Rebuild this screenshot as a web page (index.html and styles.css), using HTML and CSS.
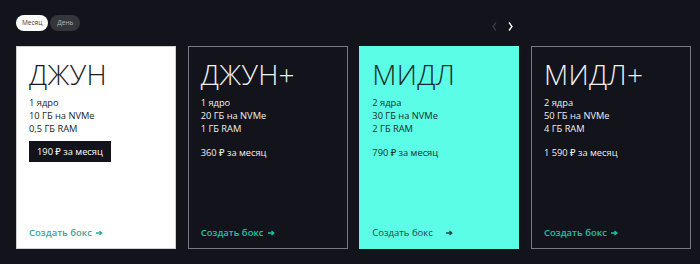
FILE: index.html
```html
<!DOCTYPE html>
<html lang="ru">
<head>
<meta charset="utf-8">
<link rel="stylesheet" href="styles.css">
</head>
<body>
<div class="page">
  <div class="top">
    <div class="tabs">
      <span class="tab tab-active">Месяц</span>
      <span class="tab">День</span>
    </div>
    <div class="nav">
      <svg class="arrow arrow-dim" width="5" height="9" viewBox="0 0 5 9"><path d="M4 0.5 L1 4.5 L4 8.5" fill="none" stroke="currentColor" stroke-width="1.3"/></svg>
      <svg class="arrow" width="5" height="9" viewBox="0 0 5 9"><path d="M1 0.5 L4 4.5 L1 8.5" fill="none" stroke="currentColor" stroke-width="1.3"/></svg>
    </div>
  </div>
  <div class="cards">
    <div class="card card-white">
      <div class="title">ДЖУН</div>
      <div class="specs">
        <div>1 ядро</div>
        <div>10 ГБ на NVMe</div>
        <div>0,5 ГБ RAM</div>
      </div>
      <div class="price price-box">190 ₽ за месяц</div>
      <a class="cta">Создать бокс <svg class="cta-arrow" width="7" height="6" viewBox="0 0 7 6"><path d="M0 3 H5.5 M3.5 1 L5.8 3 L3.5 5" fill="none" stroke="currentColor" stroke-width="1.3"/></svg></a>
    </div>
    <div class="card card-dark">
      <div class="title">ДЖУН+</div>
      <div class="specs">
        <div>1 ядро</div>
        <div>20 ГБ на NVMe</div>
        <div>1 ГБ RAM</div>
      </div>
      <div class="price">360 ₽ за месяц</div>
      <a class="cta">Создать бокс <svg class="cta-arrow" width="7" height="6" viewBox="0 0 7 6"><path d="M0 3 H5.5 M3.5 1 L5.8 3 L3.5 5" fill="none" stroke="currentColor" stroke-width="1.3"/></svg></a>
    </div>
    <div class="card card-cyan">
      <div class="title">МИДЛ</div>
      <div class="specs">
        <div>2 ядра</div>
        <div>30 ГБ на NVMe</div>
        <div>2 ГБ RAM</div>
      </div>
      <div class="price">790 ₽ за месяц</div>
      <a class="cta">Создать бокс <svg class="cta-arrow cta-arrow-far" width="7" height="6" viewBox="0 0 7 6"><path d="M0 3 H5.5 M3.5 1 L5.8 3 L3.5 5" fill="none" stroke="currentColor" stroke-width="1.3"/></svg></a>
    </div>
    <div class="card card-dark">
      <div class="title">МИДЛ+</div>
      <div class="specs">
        <div>2 ядра</div>
        <div>50 ГБ на NVMe</div>
        <div>4 ГБ RAM</div>
      </div>
      <div class="price">1 590 ₽ за месяц</div>
      <a class="cta">Создать бокс <svg class="cta-arrow" width="7" height="6" viewBox="0 0 7 6"><path d="M0 3 H5.5 M3.5 1 L5.8 3 L3.5 5" fill="none" stroke="currentColor" stroke-width="1.3"/></svg></a>
    </div>
  </div>
</div>
</body>
</html>
```

FILE: styles.css
```css
html, body {
  margin: 0;
  padding: 0;
  background: #12131b;
}
body {
  font-family: "Open Sans", "Noto Sans", sans-serif;
  color: #ffffff;
}
.page {
  width: 700px;
  height: 264px;
  box-sizing: border-box;
  padding: 15px 9px 0 16px;
}
.top {
  display: flex;
  justify-content: space-between;
  align-items: center;
  height: 16px;
}
.tabs {
  display: flex;
  gap: 2px;
}
.tab {
  height: 16px;
  line-height: 16px;
  padding: 0 7px;
  border-radius: 8px;
  background: #35363c;
  color: #b8b8bc;
  font-size: 6.5px;
}
.tab-active {
  background: #ffffff;
  color: #3a3a3e;
  padding: 0 6px;
}
.nav {
  display: flex;
  gap: 11px;
  margin-right: 178px;
  margin-top: 6px;
}
.arrow {
  display: block;
  color: #ffffff;
}
.arrow-dim {
  color: #3a3b42;
}
.cards {
  margin-top: 15px;
  display: grid;
  grid-template-columns: repeat(4, 160px);
  gap: 11.67px;
}
.card {
  height: 203px;
  box-sizing: border-box;
  padding: 11px 12px 9px;
  display: flex;
  flex-direction: column;
}
.card-white {
  background: #ffffff;
  border: 1px solid #d0d0d0;
  color: #1b1c22;
}
.card-dark {
  background: #12131b;
  border: 1px solid #7a7a7e;
  color: #f0f0f0;
}
.card-cyan {
  background: #5bfde6;
  border: 1px solid #5bfde6;
  color: #1b2a2a;
}
.title {
  font-size: 28px;
  font-weight: 300;
  line-height: 32px;
  letter-spacing: 0.3px;
}
.specs {
  margin-top: 6px;
  font-size: 9.3px;
  font-weight: 500;
  line-height: 13px;
}
.price {
  margin-top: 11px;
  font-size: 9.3px;
  font-weight: 500;
  line-height: 13px;
}
.price-box {
  align-self: flex-start;
  margin-top: 6px;
  background: #12131b;
  color: #ffffff;
  padding: 4px 8px;
  line-height: 13px;
}
.cta {
  margin-top: auto;
  font-size: 9.5px;
  line-height: 13px;
  color: #14c6a4;
  font-weight: 600;
  display: flex;
  align-items: center;
}
.card-white .cta {
  color: #38a79a;
}
.card-cyan .cta {
  color: #244444;
  font-weight: 500;
}
.cta-arrow {
  margin-left: 4px;
}
.cta-arrow-far {
  margin-left: 13px;
}
```
